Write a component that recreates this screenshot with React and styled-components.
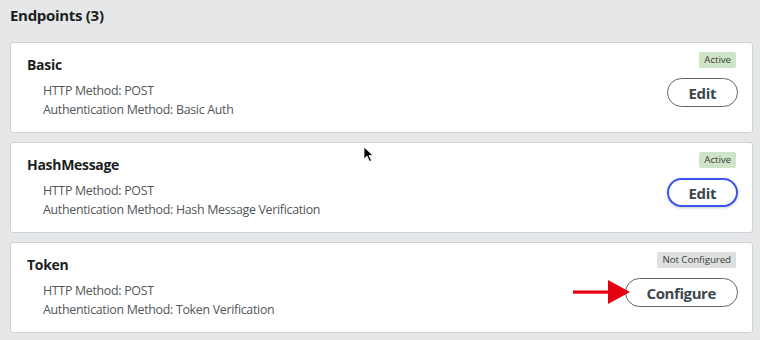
import React from 'react'
import styled, { createGlobalStyle, css } from 'styled-components'

const GlobalStyle = createGlobalStyle`
  body {
    margin: 0;
    background: #e5e7e8;
    font-family: "Open Sans", "Noto Sans", "Liberation Sans", sans-serif;
  }
`

const Page = styled.div`
  position: relative;
  width: 760px;
  height: 340px;
  padding: 4px 7px 0 10px;
  box-sizing: border-box;
  overflow: hidden;
`

const Heading = styled.h2`
  margin: 0 0 16px;
  font-size: 15px;
  letter-spacing: -0.3px;
  line-height: 22px;
  font-weight: 700;
  color: #1c1f21;
`

const List = styled.div`
  display: flex;
  flex-direction: column;
  gap: 9px;
`

const Card = styled.div`
  display: flex;
  justify-content: space-between;
  height: 91px;
  box-sizing: border-box;
  background: #fff;
  border: 1px solid #cfd3d5;
  border-radius: 3px;
  padding: 9px 14px 0 16px;
`

const Info = styled.div`
  display: flex;
  flex-direction: column;
  padding-top: 2px;
`

const Name = styled.div`
  font-size: 14px;
  letter-spacing: -0.3px;
  font-weight: 700;
  line-height: 22px;
  color: #1c1f21;
  margin-bottom: 5px;
`

const Detail = styled.div`
  font-size: 12.4px;
  letter-spacing: -0.3px;
  line-height: 19px;
  color: #505659;
  padding-left: 16px;
`

const Side = styled.div`
  display: flex;
  flex-direction: column;
  align-items: flex-end;
  gap: 10px;
`

const Badge = styled.span`
  margin-right: 2px;
  padding: 0 5px;
  height: 16px;
  line-height: 16px;
  font-size: 9.8px;
  letter-spacing: -0.1px;
  border-radius: 2px;
  color: #3a3f42;
  background: ${p => (p.$ok ? '#cfe3c6' : '#dedfe0')};
`

const ButtonWrap = styled.div`
  position: relative;
`

const Button = styled.button`
  height: 29px;
  box-sizing: border-box;
  padding: 0 21px;
  border-radius: 15px;
  background: #fff;
  font-family: inherit;
  font-size: 15px;
  letter-spacing: -0.4px;
  font-weight: 700;
  color: #3b474c;
  border: 1px solid #5f676b;
  ${p =>
    p.$focused &&
    css`
      border: 2px solid #3d55f0;
      padding: 0 20px;
      box-shadow: 0 1px 3px rgba(0, 0, 0, 0.2);
    `}
`

const Arrow = styled.svg`
  position: absolute;
  left: -52px;
  top: 1px;
`

const Cursor = styled.svg`
  position: absolute;
  left: 363px;
  top: 146px;
`

const endpoints = [
  { name: 'Basic', auth: 'Basic Auth', status: 'Active', action: 'Edit' },
  { name: 'HashMessage', auth: 'Hash Message Verification', status: 'Active', action: 'Edit', focused: true },
  { name: 'Token', auth: 'Token Verification', status: 'Not Configured', action: 'Configure', arrow: true },
]

const App = () => {
  return (
    <Page>
      <GlobalStyle />
      <Heading>Endpoints (3)</Heading>
      <List>
        {endpoints.map(ep => (
          <Card key={ep.name}>
            <Info>
              <Name>{ep.name}</Name>
              <Detail>HTTP Method: POST</Detail>
              <Detail>Authentication Method: {ep.auth}</Detail>
            </Info>
            <Side>
              <Badge $ok={ep.status === 'Active'}>{ep.status}</Badge>
              <ButtonWrap>
                <Button $focused={ep.focused}>{ep.action}</Button>
                {ep.arrow && (
                  <Arrow width="58" height="26" viewBox="0 0 58 26">
                    <rect x="0" y="11.5" width="38" height="3.2" fill="#e5000f" />
                    <polygon points="35,1 57,13 35,25" fill="#e5000f" />
                  </Arrow>
                )}
              </ButtonWrap>
            </Side>
          </Card>
        ))}
      </List>
      <Cursor width="12" height="18" viewBox="0 0 12 18">
        <path d="M1 1 L1 13 L4 10 L6.5 15.5 L8.5 14.5 L6 9.5 L10 9.5 Z" fill="#000" stroke="#fff" strokeWidth="0.8" />
      </Cursor>
    </Page>
  )
}

export default App
